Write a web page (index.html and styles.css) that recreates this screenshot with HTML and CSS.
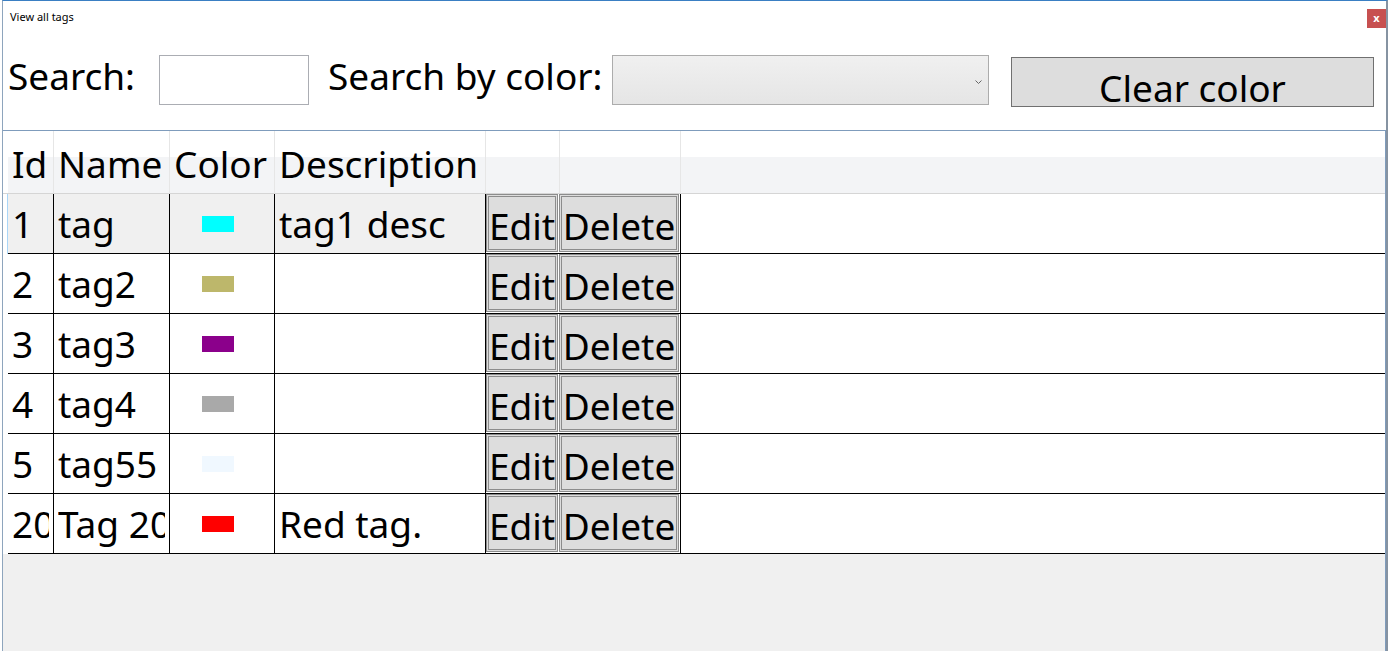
FILE: index.html
```html
<!DOCTYPE html>
<html lang="en">
<head>
<meta charset="utf-8">
<title>View all tags</title>
<link rel="stylesheet" href="styles.css">
</head>
<body>
<div class="window">
  <div class="titlebar">
    <span class="title">View all tags</span>
    <span class="close">x</span>
  </div>
  <div class="toolbar">
    <label class="lbl lbl-search">Search:</label>
    <input class="textbox" type="text">
    <label class="lbl lbl-color">Search by color:</label>
    <div class="combo">
      <svg class="chev" width="7" height="4" viewBox="0 0 7 4"><polyline points="0.5,0.5 3.5,3.5 6.5,0.5" fill="none" stroke="#666" stroke-width="1"/></svg>
    </div>
    <button class="clear">Clear color</button>
  </div>
  <div class="grid">
    <div class="row head">
      <div class="rh"></div>
      <div class="c">Id</div>
      <div class="c">Name</div>
      <div class="c">Color</div>
      <div class="c">Description</div>
      <div class="c"></div>
      <div class="c"></div>
      <div class="c fill"></div>
    </div>
    <div class="row body sel">
      <div class="rh"></div>
      <div class="c t"><span class="tx">1</span></div>
      <div class="c t"><span class="tx">tag</span></div>
      <div class="c t col"><span class="sw" style="background:#00ffff"></span></div>
      <div class="c t"><span class="tx">tag1 desc</span></div>
      <div class="c b edit"><button class="btn">Edit</button></div>
      <div class="c b del"><button class="btn">Delete</button></div>
      <div class="c fill"></div>
    </div>
    <div class="row body">
      <div class="rh"></div>
      <div class="c t"><span class="tx">2</span></div>
      <div class="c t"><span class="tx">tag2</span></div>
      <div class="c t col"><span class="sw" style="background:#bdb76b"></span></div>
      <div class="c t"></div>
      <div class="c b edit"><button class="btn">Edit</button></div>
      <div class="c b del"><button class="btn">Delete</button></div>
      <div class="c fill"></div>
    </div>
    <div class="row body">
      <div class="rh"></div>
      <div class="c t"><span class="tx">3</span></div>
      <div class="c t"><span class="tx">tag3</span></div>
      <div class="c t col"><span class="sw" style="background:#8b008b"></span></div>
      <div class="c t"></div>
      <div class="c b edit"><button class="btn">Edit</button></div>
      <div class="c b del"><button class="btn">Delete</button></div>
      <div class="c fill"></div>
    </div>
    <div class="row body">
      <div class="rh"></div>
      <div class="c t"><span class="tx">4</span></div>
      <div class="c t"><span class="tx">tag4</span></div>
      <div class="c t col"><span class="sw" style="background:#a9a9a9"></span></div>
      <div class="c t"></div>
      <div class="c b edit"><button class="btn">Edit</button></div>
      <div class="c b del"><button class="btn">Delete</button></div>
      <div class="c fill"></div>
    </div>
    <div class="row body">
      <div class="rh"></div>
      <div class="c t"><span class="tx">5</span></div>
      <div class="c t"><span class="tx">tag55</span></div>
      <div class="c t col"><span class="sw" style="background:#f0f8ff"></span></div>
      <div class="c t"></div>
      <div class="c b edit"><button class="btn">Edit</button></div>
      <div class="c b del"><button class="btn">Delete</button></div>
      <div class="c fill"></div>
    </div>
    <div class="row body">
      <div class="rh"></div>
      <div class="c t"><span class="tx">20</span></div>
      <div class="c t"><span class="tx">Tag 20</span></div>
      <div class="c t col"><span class="sw" style="background:#ff0000"></span></div>
      <div class="c t"><span class="tx">Red tag.</span></div>
      <div class="c b edit"><button class="btn">Edit</button></div>
      <div class="c b del"><button class="btn">Delete</button></div>
      <div class="c fill"></div>
    </div>
  </div>
</div>
</body>
</html>
```
FILE: styles.css
```css
* { box-sizing: border-box; }
html, body { margin: 0; padding: 0; }
body {
  width: 1388px;
  height: 651px;
  overflow: hidden;
  background: #ffffff;
  font-family: "Noto Sans", "DejaVu Sans", sans-serif;
  color: #000;
}
.window {
  margin-left: 2px;
  height: 651px;
  border-top: 1px solid #3a7fc3;
  border-left: 1px solid #8ea5bd;
  border-right: 2px solid #8693a2;
  background: #fff;
  display: flex;
  flex-direction: column;
}
.titlebar {
  height: 34px;
  flex: none;
  display: flex;
  justify-content: space-between;
  align-items: flex-start;
  padding: 8px 0 0 7px;
}
.title { font-size: 11px; line-height: 15px; }
.close {
  width: 19px;
  height: 19px;
  background: #c75050;
  color: #fff;
  font-weight: bold;
  font-size: 11px;
  line-height: 17px;
  text-align: center;
}
.toolbar {
  height: 95px;
  flex: none;
  display: flex;
  align-items: flex-start;
  padding: 20px 0 0 5px;
  font-size: 37px;
}
.lbl { line-height: 50px; margin-top: -4px; white-space: nowrap; }
.lbl-search { width: 151px; }
.lbl-color { width: 284px; margin-left: 19px; }
.textbox {
  width: 150px;
  height: 50px;
  border: 1px solid #abadb3;
  background: #fff;
  margin: 0;
  padding: 0;
  font: inherit;
}
.combo {
  width: 377px;
  height: 50px;
  border: 1px solid #acacac;
  background: linear-gradient(#f0f0f0, #e5e5e5);
  display: flex;
  align-items: center;
  justify-content: flex-end;
  padding: 4px 6px 0 0;
}
.clear {
  width: 363px;
  height: 50px;
  margin: 2px 0 0 22px;
  background: #dddddd;
  border: 1px solid #707070;
  font-family: inherit;
  font-size: 37px;
  line-height: 37px;
  padding: 11px 0 0;
  overflow: hidden;
  color: #000;
}
.grid {
  flex: 1;
  border-top: 1px solid #7f9cbc;
  border-right: 1px solid #7f9cbc;
  background: #f0f0f0;
  font-size: 37px;
}
.row {
  display: grid;
  grid-template-columns: 5px 46px 116px 105px 211px 74px 121px 1fr;
}
.head { height: 63px; }
.head .rh { background: #fff; border-bottom: 1px solid #d5d5d5; }
.head .c {
  background: linear-gradient(#ffffff 0 26px, #f3f4f6 26px);
  border-bottom: 1px solid #d5d5d5;
  border-right: 1px solid #e6e6e6;
  padding: 3px 0 0 4px;
  line-height: 59px;
  white-space: nowrap;
  overflow: hidden;
}
.head .fill { border-right: none; }
.body { height: 60px; }
.body .rh { background: #fff; }
.sel .rh { border-right: 1px solid #a9d5f7; }
.body .c {
  background: #fff;
  border-bottom: 1px solid #000;
  border-right: 1px solid #000;
  line-height: 59px;
  padding-left: 4px;
  white-space: nowrap;
  overflow: hidden;
}
.tx { display: block; overflow: hidden; margin-right: 4px; }
.sel .c.t { background: #f0f0f0; }
.body .col { display: flex; align-items: center; padding-left: 32px; }
.sw { width: 32px; height: 16px; display: block; }
.body .edit { border-right: none; padding: 0; }
.body .del { padding: 0; overflow: visible; }
.body .fill { border-right: none; }
.btn {
  display: block;
  height: 58px;
  margin: 0;
  border: 3px double #8c8c8c;
  background: #dddddd;
  font-family: inherit;
  font-size: 37px;
  line-height: 47px;
  padding: 5px 0 0;
  text-align: center;
  overflow: hidden;
  white-space: nowrap;
  color: #000;
}
.edit .btn { width: 72px; }
.del .btn { width: 120px; margin-left: -1px; }
```
